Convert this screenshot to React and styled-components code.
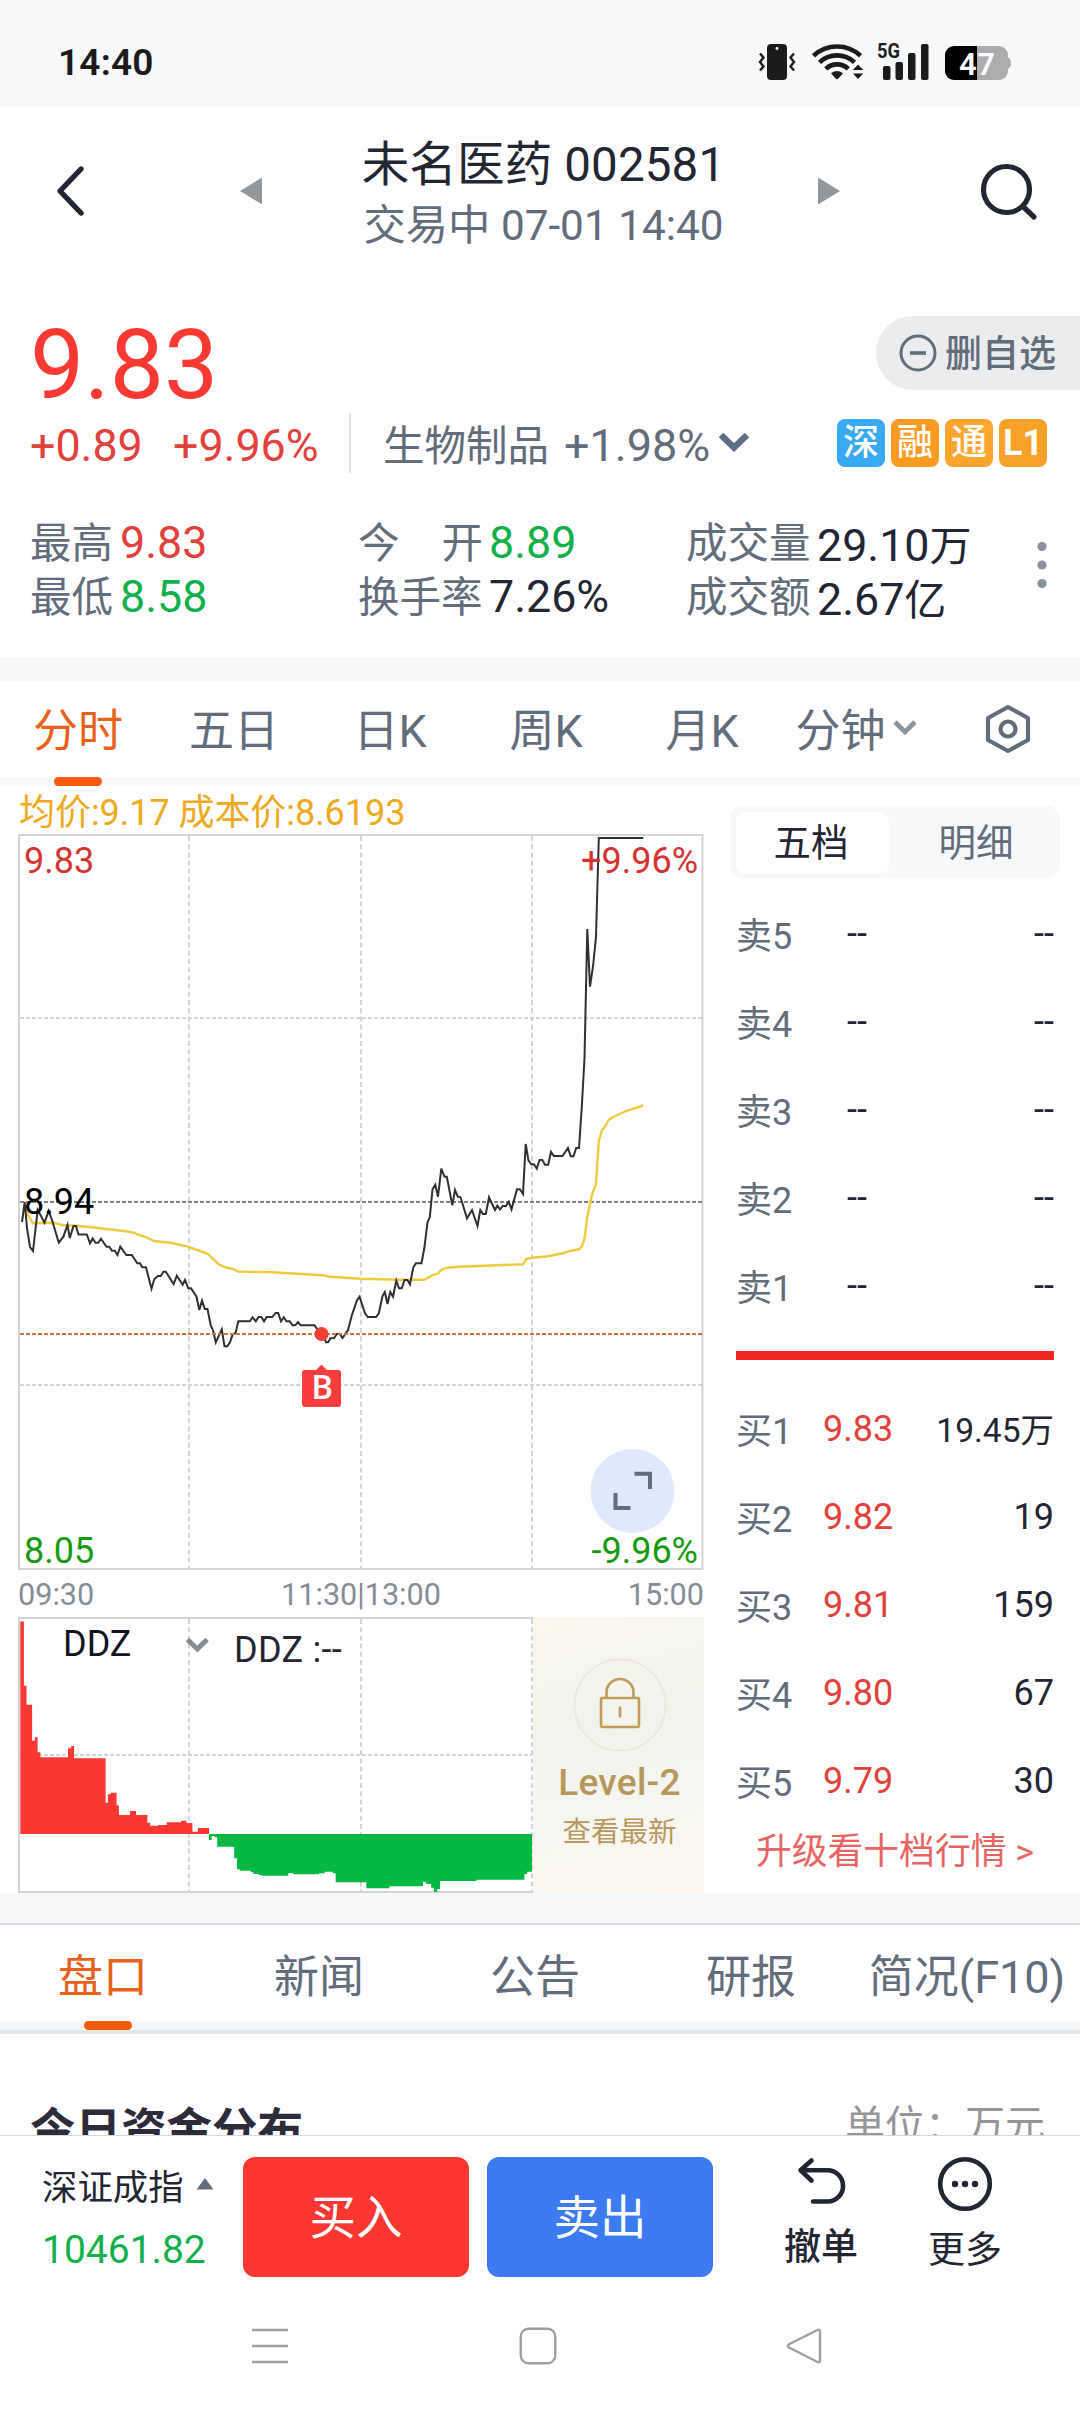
import React from "react";
import styled, { createGlobalStyle } from "styled-components";

const C = {
  ink: "#222632",
  slate: "#626d7b",
  grey: "#848d96",
  red: "#fa3932",
  softRed: "#e2403a",
  green: "#12b04a",
  orange: "#e7611a",
  accent: "#f55a0b",
  band: "#f7f8fa",
};

const GlobalStyle = createGlobalStyle`
  * { box-sizing: border-box; }
  body {
    margin: 0;
    background: #fff;
    color: ${C.ink};
    font-family: Roboto, "Noto Sans CJK SC", sans-serif;
  }
  svg { display: block; flex: none; overflow: visible; }
  svg text { font-family: Roboto, "Noto Sans CJK SC", sans-serif; }
`;

const Screen = styled.div`
  width: 1080px;
  height: 2412px;
  overflow: hidden;
  display: flex;
  flex-direction: column;
  background: #fff;
  white-space: nowrap;
`;

const Band = styled.div`
  flex: none;
  height: ${(p) => p.$h}px;
  background: ${C.band};
`;

/* ---------- status bar ---------- */
const StatusBar = styled.header`
  flex: none;
  height: 107px;
  padding: 16px 68px 0 58px;
  display: flex;
  align-items: center;
  justify-content: space-between;
  background: ${C.band};
  color: #1b1b1b;
`;
const Clock = styled.span`
  padding-top: 2px;
  font-size: 37px;
  font-weight: 600;
  letter-spacing: 0.2px;
`;

const StatusIcons = () => (
  <svg width="256" height="44" viewBox="756 40 256 44" fill="#1b1b1b">
    <rect x="767" y="44" width="20" height="36" rx="4" />
    <circle cx="777" cy="48.5" r="1.4" fill="#fff" />
    <path d="M760 53.5l3.5 4-3.5 4.5 3.5 4.5-3.5 4M794 53.5l-3.5 4 3.5 4.5-3.5 4.5 3.5 4" fill="none" stroke="#1b1b1b" strokeWidth="2.4" />
    <g fill="none" stroke="#1b1b1b" strokeWidth="4.6">
      <path d="M813.5 55.8a34.5 34.5 0 0 1 47 0" />
      <path d="M819.5 62.3a25.5 25.5 0 0 1 35 0" />
      <path d="M825.8 68.8a16.4 16.4 0 0 1 22.5 0" />
    </g>
    <path d="M831 73.2q6-4.6 12 0l-4.6 5.4q-1.4 1.3-2.8 0zM858 64.5l5.2 5.4h-10.4zM853 73.6h10.2L858 79z" />
    <text x="877" y="58" fontSize="20.5" fontWeight="700" textLength="23" lengthAdjust="spacingAndGlyphs">5G</text>
    <rect x="883" y="66" width="7.5" height="14" rx="2" />
    <rect x="895.5" y="62" width="7.5" height="18" rx="2" />
    <rect x="908" y="53" width="7.5" height="27" rx="2" />
    <rect x="921" y="44" width="7.5" height="36" rx="2" />
    <rect x="945" y="46" width="63" height="34" rx="9" fill="#acacae" />
    <path d="M1007 57q4 1 4 6t-4 6z" fill="#acacae" />
    <path d="M954 46h23v34h-23a9 9 0 0 1-9-9V55a9 9 0 0 1 9-9z" fill="#000" />
    <text x="959" y="74.500" fontSize="31" fontWeight="600" fill="#fff" textLength="36">47</text>
  </svg>
);

/* ---------- title bar ---------- */
const TitleBar = styled.nav`
  flex: none;
  height: 183px;
  padding: 0 40px 16px 54px;
  display: grid;
  grid-template-columns: 186px 24px 1fr 24px 140px 60px;
  align-items: center;
`;
const TitleBlock = styled.div`
  padding: 6px 0 0 7px;
  display: flex;
  flex-direction: column;
  align-items: center;
`;
const StockName = styled.div`
  font-size: 47.5px;
  line-height: 64px;
  letter-spacing: 0.15px;
`;
const TradeState = styled.div`
  font-size: 42.3px;
  line-height: 58px;
  color: ${C.slate};
`;

/* ---------- quote ---------- */
const Quote = styled.section`
  flex: none;
  height: 367px;
  display: flex;
  flex-direction: column;
`;
const PriceRow = styled.div`
  height: 123px;
  padding: 22px 0 0 30px;
  display: flex;
  justify-content: space-between;
`;
const Price = styled.div`
  padding-top: 2px;
  font-size: 96.5px;
  line-height: 102px;
  color: ${C.red};
`;
const WatchButton = styled.button`
  margin-top: 4px;
  width: 204px;
  height: 74px;
  padding: 0 0 0 21px;
  border: 0;
  border-radius: 37px 0 0 37px;
  background: #ebecee;
  display: flex;
  align-items: center;
  gap: 6px;
  color: ${C.slate};
`;
const WatchLabel = styled.span`
  padding-top: 3px;
  font: 500 37px/50px Roboto, "Noto Sans CJK SC", sans-serif;
`;
const ChangeRow = styled.div`
  height: 60px;
  padding: 0 33px 0 30px;
  display: flex;
  align-items: center;
`;
const Change = styled.span`
  width: ${(p) => p.$w}px;
  padding-top: 4px;
  font-size: 44.8px;
  color: ${C.softRed};
`;
const Divider = styled.i`
  width: 2px;
  height: 60px;
  background: #dfe3ea;
`;
const Sector = styled.span`
  margin-left: 32px;
  font-size: 41.5px;
  color: ${C.slate};
`;
const SectorChange = styled.span`
  margin: 0 8px 0 15px;
  padding-top: 4px;
  font-size: 45px;
  color: ${C.slate};
`;
const Tags = styled.div`
  margin-left: auto;
  display: flex;
  gap: 6px;
`;
const Tag = styled.span`
  width: 48px;
  height: 48px;
  border-radius: 8px;
  background: ${(p) => p.$bg};
  color: #fff;
  font-size: 36px;
  font-weight: ${(p) => (p.$bold ? 700 : 500)};
  line-height: 48px;
  text-align: center;
`;
const Stats = styled.div`
  padding: 41px 30px 0 30px;
  display: grid;
  grid-template-columns: 328px 328px 1fr auto;
`;
const StatColumn = styled.div`
  display: flex;
  flex-direction: column;
`;
const Stat = styled.div`
  height: 54px;
  display: flex;
  align-items: center;
  gap: 6px;
`;
const StatLabel = styled.span`
  width: ${(p) => p.$w}px;
  padding-bottom: 3px;
  display: flex;
  justify-content: space-between;
  font-size: 41.5px;
  color: ${C.slate};
`;
const StatValue = styled.span`
  padding-top: 2px;
  font-size: 44.8px;
  color: ${(p) => p.$color || C.ink};
`;
const Unit = styled.span`
  font-size: 42px;
`;

/* ---------- tabs ---------- */
const Tabs = styled.nav`
  flex: none;
  height: ${(p) => p.$h}px;
  display: grid;
  grid-template-columns: repeat(${(p) => p.$n}, ${(p) => p.$w}px) 1fr;
  background: linear-gradient(#fff 96px, ${C.band} 96px);
`;
const Tab = styled.div`
  height: 105px;
  display: flex;
  flex-direction: column;
  align-items: center;
  justify-content: space-between;
  font-size: 45px;
  color: ${(p) => (p.$active ? C.orange : C.slate)};
`;
const TabLabel = styled.div`
  height: 96px;
  padding: 0 ${(p) => p.$shift || 0}px ${(p) => p.$lift || 0}px 0;
  display: flex;
  align-items: center;
  gap: 7px;
`;
const Indicator = styled.i`
  width: 48px;
  height: 9px;
  border-radius: 5px;
  background: ${C.accent};
`;

/* ---------- chart area ---------- */
const Market = styled.main`
  flex: none;
  height: 1107px;
  display: flex;
`;
const ChartColumn = styled.div`
  width: 704px;
  display: flex;
  flex-direction: column;
`;
const Legend = styled.div`
  height: 48px;
  padding: 3px 0 0 19px;
  font-size: 36px;
  line-height: 48px;
  letter-spacing: -0.05px;
  color: #efa91c;
`;
const TimeAxis = styled.div`
  height: 47px;
  padding: 2px 0 0 18px;
  display: grid;
  grid-template-columns: 1fr auto 1fr;
  align-items: center;
  font-size: 30.6px;
  color: ${C.grey};
`;
const TimeEnd = styled.span`
  text-align: right;
`;
const FlowRow = styled.div`
  display: flex;
`;
const LevelCard = styled.div`
  width: 171px;
  height: 276px;
  padding: 41px 0 0 2px;
  display: flex;
  flex-direction: column;
  align-items: center;
  background: linear-gradient(165deg, #faf7ec 0%, #f1f3ec 40%, #f6f6f0 70%, #fcf8ef 100%);
  color: #b8975a;
`;
const LevelName = styled.div`
  margin-top: 7px;
  font-size: 37px;
  font-weight: 500;
  line-height: 48px;
  letter-spacing: 0.3px;
`;
const LevelHint = styled.div`
  margin-top: 6px;
  font-size: 28.5px;
  line-height: 40px;
`;

/* ---------- order book ---------- */
const Book = styled.aside`
  flex: 1;
  padding: 20px 20px 0 26px;
  display: flex;
  flex-direction: column;
`;
const Switcher = styled.div`
  height: 72px;
  padding: 6px;
  display: grid;
  grid-template-columns: 153px 1fr;
  border-radius: 12px;
  background: ${C.band};
  font-size: 37.5px;
  line-height: 62px;
  text-align: center;
`;
const SwitchItem = styled.div`
  border-radius: 10px;
  padding: ${(p) => (p.$active ? "0 3px 0 0" : "0 0 0 9px")};
  background: ${(p) => (p.$active ? "#fff" : "transparent")};
  color: ${(p) => (p.$active ? C.ink : C.slate)};
`;
const Levels = styled.div`
  padding: ${(p) => p.$top}px 6px 0 6px;
`;
const Level = styled.div`
  height: 88px;
  display: grid;
  grid-template-columns: 87px 80px 1fr;
  align-items: center;
  font-size: 36px;
`;
const Side = styled.span`
  padding-bottom: 3px;
  color: ${C.slate};
`;
const LevelPrice = styled.span`
  padding-left: ${(p) => (p.$empty ? 24 : 0)}px;
  color: ${(p) => (p.$empty ? C.ink : C.softRed)};
`;
const Quantity = styled.span`
  padding-bottom: ${(p) => (p.$long ? 3 : 0)}px;
  text-align: right;
  font-size: ${(p) => (p.$long ? 33.5 : 36)}px;
`;
const RatioBar = styled.div`
  margin: 21px 6px 0;
  height: 9px;
  background: #ee2624;
`;
const Upgrade = styled.div`
  height: 54px;
  font-size: 35.8px;
  line-height: 54px;
  text-align: center;
  color: #e86462;
`;

/* ---------- news tabs, card ---------- */
const SectionTabs = styled.section`
  flex: none;
  border-top: 2px solid #d4d8de;
  border-bottom: 4px solid #e3e6e9;
`;
const Card = styled.section`
  flex: none;
  height: 101px;
  padding: 67px 35px 0 30px;
  overflow: hidden;
  display: flex;
  justify-content: space-between;
`;
const CardTitle = styled.h2`
  margin: 0;
  font-size: 45.5px;
  line-height: 60px;
  font-weight: 700;
  color: #2c2c3a;
`;
const CardUnit = styled.span`
  font-size: 40px;
  line-height: 50px;
  color: #959595;
`;

/* ---------- bottom bar ---------- */
const TradeBar = styled.footer`
  flex: none;
  height: 153px;
  border-top: 1px solid #d5dadb;
  display: flex;
`;
const IndexInfo = styled.div`
  width: 243px;
  padding: 22px 0 0 42px;
`;
const IndexName = styled.div`
  height: 52px;
  display: flex;
  align-items: center;
  gap: 12px;
  font-size: 35.4px;
`;
const IndexValue = styled.div`
  margin-top: 13px;
  font-size: 39px;
  line-height: 54px;
  color: ${C.green};
`;
const TradeButton = styled.button`
  margin: 21px 18px 0 0;
  width: 226px;
  height: 120px;
  padding: 2px 0 0;
  border: 0;
  border-radius: 12px;
  background: ${(p) => p.$bg};
  color: #fff;
  font: 400 46.5px/60px Roboto, "Noto Sans CJK SC", sans-serif;
`;
const Action = styled.div`
  margin-left: ${(p) => p.$left}px;
  width: 80px;
  padding-top: 21px;
  display: flex;
  flex-direction: column;
  align-items: center;
  gap: ${(p) => p.$gap}px;
  font-size: 37px;
  font-weight: ${(p) => (p.$strong ? 500 : 400)};
  line-height: 50px;
`;
const SystemNav = styled.div`
  flex: none;
  height: 116px;
  padding: 0 258px 0 251px;
  display: flex;
  align-items: center;
  justify-content: space-between;
`;

/* ---------- data ---------- */
const PRICE_LINE =
  "22,1222 24.7,1202 27,1228 30,1247 33,1251 37.7,1210 41,1216 44.5,1222.7 48.7,1211 52,1220 58.8,1242.7 63.4,1236.7 67.5,1225 69.8,1238 73.5,1226 76,1226 78.5,1234.5 86.8,1234.5 90,1243.3 92.7,1238.5 95.5,1242.7 98.3,1242.7 101,1238.7 106.5,1246.7 109.3,1246.7 112,1250.7 114.8,1250.7 117.5,1255 120.3,1246.7 126.3,1255 131.8,1255 137.3,1263.3 140,1263.3 142.3,1267.3 146,1267.3 151.5,1288.7 154.3,1279 158,1276 160.7,1276 163.5,1271.7 165.8,1271.7 173.6,1284 176.8,1275.7 182.7,1284.7 185,1280 188.3,1288.3 191,1288.3 196.5,1296.7 199.3,1310 202,1300.7 204.8,1309 207.5,1309 210.8,1325.7 213,1330 215.8,1342.3 221.8,1329.3 224.5,1346.3 227.3,1346.3 230,1342.3 232.8,1334 235.5,1333.3 238.3,1321.3 249.8,1321.3 252.5,1317.3 255.8,1321.3 258.5,1317 261.3,1317 264,1321.3 266.8,1317 272.3,1317 275.5,1313 278.2,1313 281,1321.3 283.8,1317.3 286.5,1321.3 289.7,1321.3 292.5,1325.3 295.2,1325.3 298,1322 300.7,1325.3 314.5,1325.3 320,1333.3 323.2,1334.7 326,1342.3 328,1342.3 330.6,1338.3 334,1338 337,1333.7 339.8,1334 342.5,1338 345.3,1334 348,1330 351.7,1315.7 356.8,1300.7 359.5,1296.7 365,1313.3 367.8,1317 376,1317 378.8,1313.3 382.5,1296 384.8,1292 387.5,1304 390.3,1292 393,1296.7 396.3,1280.7 399,1288.3 401.8,1288.3 404.5,1280 407.3,1280 410,1284.3 413.3,1267.3 416,1263.3 421.5,1263.3 424.3,1248.3 427.5,1222.3 429.8,1217.3 432.5,1189.3 435.3,1184.7 438,1196.7 441.3,1168.7 444.5,1176.7 446.8,1176.7 450,1193.3 452.3,1205.3 455,1190 457.8,1196.7 460.5,1197.3 467,1218.3 472,1210 474.8,1218.3 477.5,1226 480.3,1210 483,1214 485.8,1214 489,1197.3 495,1210 497.3,1205.7 500,1209.3 502.8,1206 506,1206 508.8,1201.7 511.5,1209.3 517,1189.3 519.8,1189.3 523,1194 525.7,1144 528.5,1160.7 531.3,1164.3 534,1164.3 536.8,1168.7 539.5,1160 542.3,1160 545,1164.7 548.2,1164.7 551,1151.7 553.8,1156 562.5,1156 568,1148 570.7,1156.3 573.5,1156.3 576.2,1148 579,1148 581.8,1106.7 584.5,1058.3 587.3,929 590,986.7 593.2,965 596,936.7 598.8,838 643.3,838";

const AVERAGE_LINE =
  "24,1208 28,1215 33,1223.3 53,1222.7 62,1225 74,1225.7 90,1227 106,1229 126,1231.3 134,1232.7 139,1235 146,1237 154,1241 172,1243 187,1246.3 200,1251 208,1254 213,1259 219,1264.5 226,1267.5 233,1269 238,1271.5 272,1272.3 323,1275.3 330,1276.7 361,1278.7 400,1279.8 424,1279.8 433,1275 438,1273.3 442,1269.3 447,1267.7 459,1266.7 523,1264.3 526,1259 532,1257.7 548,1256.3 563,1253.3 568,1251.3 579,1249.3 582,1246 584.5,1239 587.3,1216.7 592,1194.7 596,1184 598.8,1141 602,1130 605,1126.7 608.5,1120 613,1117 626,1111 643,1105.5";

/* [right edge, signed height] for each run of equal bars */
const INFLOW = [
  [23.9, 212.5], [26.5, 148.3], [32.1, 129.3], [34.9, 93.3], [37.6, 96.7], [40.4, 81.7],
  [68, 76.7], [71.2, 85.7], [74, 88], [105.6, 75.7], [107.9, 31.3], [110.7, 39.7],
  [116.6, 41.3], [118.9, 28.7], [130, 19], [136, 23], [147.4, 19], [150.2, 11.3],
  [158, 8.3], [166.7, 9], [181, 11.7], [186.4, 13.3], [192.4, 11], [197.9, 2.3], [209, 6],
];
const OUTFLOW = [
  [211.7, -6], [214.5, -2], [217.2, -3.3], [234.2, -12.7], [237, -24.3], [239.7, -35.3],
  [250.7, -36.7], [253.5, -38.3], [259, -40], [261.8, -41], [288.4, -41.7], [293, -39],
  [319.2, -40.3], [324.7, -39.3], [332.9, -37.7], [335.7, -39.3], [366.4, -48.3],
  [389.4, -54.3], [423, -52.3], [425.7, -47.7], [431.2, -49.7], [434, -53.7], [437.2, -58],
  [440, -55], [476.7, -47], [524.4, -45.7], [527.2, -40], [532, -37.7],
];
const ZERO = 1834;

const stepArea = (start, runs) => {
  let d = `M${start} ${ZERO}`;
  runs.forEach(([x, h]) => {
    d += `V${ZERO - h}H${x}`;
  });
  return `${d}V${ZERO}Z`;
};

const GRID = { stroke: "#d2d3d5", strokeWidth: 2, fill: "none" };

const PriceChart = () => (
  <svg width="704" height="736" viewBox="0 834 704 736">
    <g {...GRID}>
      <path d="M189 836V1568M361 836V1568M532 836V1568" strokeDasharray="5 3.2" />
      <path d="M20 1018H702M20 1385H702" strokeDasharray="4 2" />
      <rect x="19" y="835" width="683.5" height="734" />
    </g>
    <path d="M20 1202H702" stroke="#7b8288" strokeWidth="2" strokeDasharray="4 2" />
    <polyline points={AVERAGE_LINE} fill="none" stroke="#efcb3c" strokeWidth="2.4" />
    <polyline points={PRICE_LINE} fill="none" stroke="#303030" strokeWidth="2" />
    <path d="M20 1334H702" stroke="#cb7440" strokeWidth="2" strokeDasharray="4 2" />
    <circle cx="321.5" cy="1334" r="7" fill="#ee3f35" />
    <path d="M305 1370h11l5.5-5.5 5.5 5.5h11a3 3 0 0 1 3 3v31a3 3 0 0 1-3 3h-33a3 3 0 0 1-3-3v-31a3 3 0 0 1 3-3z" fill="#f93c3c" />
    <g fontSize="36">
      <text x="322.5" y="1399" textAnchor="middle" fontSize="33" fontWeight="500" fill="#fff">B</text>
      <text x="24" y="873" fill="#d33431">9.83</text>
      <text x="698" y="873" fill="#d33431" textAnchor="end">+9.96%</text>
      <text x="24" y="1214" fill="#000">8.94</text>
      <text x="24" y="1562.500" fill="#149a0c">8.05</text>
      <text x="698" y="1562.500" fill="#149a0c" textAnchor="end">-9.96%</text>
    </g>
    <circle cx="632.5" cy="1491" r="42" fill="#dfe9fb" />
    <path d="M634.5 1473.8H650V1489M615.5 1493V1508H630.5" fill="none" stroke="#626d7b" strokeWidth="4" />
  </svg>
);

const FlowChart = () => (
  <svg width="533" height="276" viewBox="0 1617 533 276">
    <g {...GRID}>
      <path d="M189 1619V1891M361 1619V1891M532 1619V1891" strokeDasharray="5 3.2" />
      <path d="M20 1755H532" strokeDasharray="4 2" />
      <path d="M533 1618H19V1892H533" />
    </g>
    <path d={stepArea(20.3, INFLOW)} fill="#f93832" />
    <path d={stepArea(209, OUTFLOW)} fill="#03b944" />
    <text x="63" y="1656" fontSize="36" fill="#10141f">DDZ</text>
    <path d="M187.500 1639.500l9.800 9.500 9.800-9.500" fill="none" stroke="#848d96" strokeWidth="5" />
    <text x="234" y="1661.500" fontSize="36" letterSpacing="0.300" fill="#222632">DDZ :--</text>
  </svg>
);

const LockIcon = () => (
  <svg width="94" height="94" viewBox="574 1658 94 94" fill="none">
    <circle cx="621" cy="1705" r="45.5" stroke="#e9e7da" strokeWidth="1.6" />
    <g stroke="#c09c55" strokeWidth="2.6" strokeLinejoin="round" strokeLinecap="round">
      <rect x="602" y="1698" width="38" height="29" rx="1.5" />
      <path d="M607.5 1697v-4.500a13.500 13.500 0 0 1 27 0v4.500M621 1707.500v9" />
    </g>
  </svg>
);

const SELLS = ["卖5", "卖4", "卖3", "卖2", "卖1"];
const BUYS = [
  ["买1", "9.83", "19.45万"],
  ["买2", "9.82", "19"],
  ["买3", "9.81", "159"],
  ["买4", "9.80", "67"],
  ["买5", "9.79", "30"],
];
const PERIODS = ["分时", "五日", "日K", "周K", "月K"];
const SECTIONS = ["盘口", "新闻", "公告", "研报", "简况(F10)"];

export default function App() {
  return (
    <>
      <GlobalStyle />
      <Screen>
        <StatusBar>
          <Clock>14:40</Clock>
          <StatusIcons />
        </StatusBar>

        <TitleBar>
          <svg width="34" height="54" viewBox="0 0 34 54" fill="none" stroke={C.ink} strokeWidth="5.4" strokeLinecap="round" strokeLinejoin="round">
            <path d="M27 5L6 27l21 22" />
          </svg>
          <svg width="24" height="28" viewBox="0 0 24 28"><path d="M0 14L22 .5v27z" fill="#92979b" /></svg>
          <TitleBlock>
            <StockName>未名医药 002581</StockName>
            <TradeState>交易中 07-01 14:40</TradeState>
          </TitleBlock>
          <svg width="24" height="28" viewBox="0 0 24 28"><path d="M24 14L2 .5v27z" fill="#92979b" /></svg>
          <i />
          <svg width="60" height="60" viewBox="0 0 60 60" fill="none" stroke={C.ink} strokeWidth="5.2" strokeLinecap="round">
            <circle cx="26.500" cy="28.500" r="23" />
            <path d="M43 45.500l11 10.500" />
          </svg>
        </TitleBar>

        <Quote>
          <PriceRow>
            <Price>9.83</Price>
            <WatchButton>
              <svg width="42" height="42" viewBox="0 0 42 42" fill="none" stroke={C.slate} strokeWidth="3">
                <circle cx="21" cy="21" r="17" />
                <path d="M13 21h16" strokeWidth="3.6" />
              </svg>
              <WatchLabel>删自选</WatchLabel>
            </WatchButton>
          </PriceRow>
          <ChangeRow>
            <Change $w={143}>+0.89</Change>
            <Change $w={176}>+9.96%</Change>
            <Divider />
            <Sector>生物制品</Sector>
            <SectorChange>+1.98%</SectorChange>
            <svg width="32" height="24" viewBox="0 0 32 24" fill="none" stroke="#5c6d85" strokeWidth="6.5">
              <path d="M3 4l13 12.5L29 4" />
            </svg>
            <Tags>
              <Tag $bg="#38aaf4">深</Tag>
              <Tag $bg="#fb9b22">融</Tag>
              <Tag $bg="#fda52f">通</Tag>
              <Tag $bg="#f7a128" $bold>L1</Tag>
            </Tags>
          </ChangeRow>
          <Stats>
            <StatColumn>
              <Stat><StatLabel $w={84}>最高</StatLabel><StatValue $color={C.softRed}>9.83</StatValue></Stat>
              <Stat><StatLabel $w={84}>最低</StatLabel><StatValue $color={C.green}>8.58</StatValue></Stat>
            </StatColumn>
            <StatColumn>
              <Stat><StatLabel $w={125}><span>今</span><span>开</span></StatLabel><StatValue $color={C.green}>8.89</StatValue></Stat>
              <Stat><StatLabel $w={125}>换手率</StatLabel><StatValue>7.26%</StatValue></Stat>
            </StatColumn>
            <StatColumn>
              <Stat><StatLabel $w={125}>成交量</StatLabel><StatValue>29.10<Unit>万</Unit></StatValue></Stat>
              <Stat><StatLabel $w={125}>成交额</StatLabel><StatValue>2.67<Unit>亿</Unit></StatValue></Stat>
            </StatColumn>
            <svg width="16" height="104" viewBox="0 0 16 104" fill="#8a929b">
              <circle cx="8" cy="32.500" r="4.6" />
              <circle cx="8" cy="51" r="4.6" />
              <circle cx="8" cy="69.500" r="4.6" />
            </svg>
          </Stats>
        </Quote>

        <Band $h={24} />
        <Tabs $n={6} $w={156} $h={105}>
          {PERIODS.map((name, i) => (
            <Tab key={name} $active={i === 0}>
              <TabLabel $lift={3}>{name}</TabLabel>
              {i === 0 && <Indicator />}
            </Tab>
          ))}
          <Tab>
            <TabLabel $lift={3} $shift={4}>
              分钟
              <svg width="24" height="24" viewBox="0 0 24 24" fill="none" stroke="#8b939c" strokeWidth="4.600">
                <path d="M2 6l10 10L22 6" />
              </svg>
            </TabLabel>
          </Tab>
          <Tab>
            <TabLabel $shift={1}>
              <svg width="50" height="50" viewBox="0 0 50 50" fill="none" stroke={C.slate} strokeWidth="4.200" strokeLinejoin="round">
                <path d="M25 3l20 11v22L25 47 5 36V14z" />
                <circle cx="25" cy="25" r="7.5" />
              </svg>
            </TabLabel>
          </Tab>
        </Tabs>

        <Market>
          <ChartColumn>
            <Legend>均价:9.17 成本价:8.6193</Legend>
            <PriceChart />
            <TimeAxis>
              <span>09:30</span>
              <span>11:30|13:00</span>
              <TimeEnd>15:00</TimeEnd>
            </TimeAxis>
            <FlowRow>
              <FlowChart />
              <LevelCard>
                <LockIcon />
                <LevelName>Level-2</LevelName>
                <LevelHint>查看最新</LevelHint>
              </LevelCard>
            </FlowRow>
          </ChartColumn>
          <Book>
            <Switcher>
              <SwitchItem $active>五档</SwitchItem>
              <SwitchItem>明细</SwitchItem>
            </Switcher>
            <Levels $top={12}>
              {SELLS.map((side) => (
                <Level key={side}>
                  <Side>{side}</Side>
                  <LevelPrice $empty>--</LevelPrice>
                  <Quantity>--</Quantity>
                </Level>
              ))}
            </Levels>
            <RatioBar />
            <Levels $top={25}>
              {BUYS.map(([side, price, qty]) => (
                <Level key={side}>
                  <Side>{side}</Side>
                  <LevelPrice>{price}</LevelPrice>
                  <Quantity $long={qty.length > 4}>{qty}</Quantity>
                </Level>
              ))}
            </Levels>
            <Upgrade>升级看十档行情 &gt;</Upgrade>
          </Book>
        </Market>

        <Band $h={30} />
        <SectionTabs>
          <Tabs $n={4} $w={216} $h={105}>
            {SECTIONS.map((name, i) => (
              <Tab key={name} $active={i === 0}>
                <TabLabel $shift={10}>{name}</TabLabel>
                {i === 0 && <Indicator />}
              </Tab>
            ))}
          </Tabs>
        </SectionTabs>
        <Card>
          <CardTitle>今日资金分布</CardTitle>
          <CardUnit>单位：万元</CardUnit>
        </Card>

        <TradeBar>
          <IndexInfo>
            <IndexName>
              深证成指
              <svg width="18" height="12" viewBox="0 0 18 12"><path d="M9 0l8.5 11.5H.5z" fill="#626d7b" /></svg>
            </IndexName>
            <IndexValue>10461.82</IndexValue>
          </IndexInfo>
          <TradeButton $bg="#fa3831">买入</TradeButton>
          <TradeButton $bg="#3c7aef">卖出</TradeButton>
          <Action $left={50} $gap={14} $strong>
            <svg width="54" height="52" viewBox="795 2157 54 52" fill="none" stroke={C.ink} strokeWidth="4.6" strokeLinecap="round" strokeLinejoin="round">
              <path d="M812.5 2160.5L801.5 2170.3L812.5 2180.5M802 2170.3H828.5a15.6 15.6 0 0 1 0 31.2H814" />
            </svg>
            撤单
          </Action>
          <Action $left={64} $gap={15}>
            <svg width="54" height="54" viewBox="0 0 54 54" fill="none" stroke={C.ink} strokeWidth="4.600">
              <circle cx="27" cy="27" r="24.8" />
              <g fill={C.ink} stroke="none">
                <circle cx="17" cy="27" r="3.2" />
                <circle cx="27" cy="27" r="3.2" />
                <circle cx="37" cy="27" r="3.2" />
              </g>
            </svg>
            更多
          </Action>
        </TradeBar>

        <SystemNav>
          <svg width="38" height="38" viewBox="0 0 38 38" stroke="#9f9f9f" strokeWidth="2.6">
            <path d="M1 3h36M1 19h36M1 35h36" />
          </svg>
          <svg width="38" height="38" viewBox="0 0 38 38" fill="none" stroke="#9f9f9f" strokeWidth="2.4">
            <rect x="1.8" y="1.8" width="34.4" height="34.4" rx="7.5" />
          </svg>
          <svg width="36" height="38" viewBox="0 0 36 38" fill="none" stroke="#9f9f9f" strokeWidth="2.4" strokeLinejoin="round">
            <path d="M3 17.3L31.5 3q2.5-1 2.5 2v28q0 3-2.5 2L3 20.5q-2.2-1.6 0-3.2z" />
          </svg>
        </SystemNav>
      </Screen>
    </>
  );
}
